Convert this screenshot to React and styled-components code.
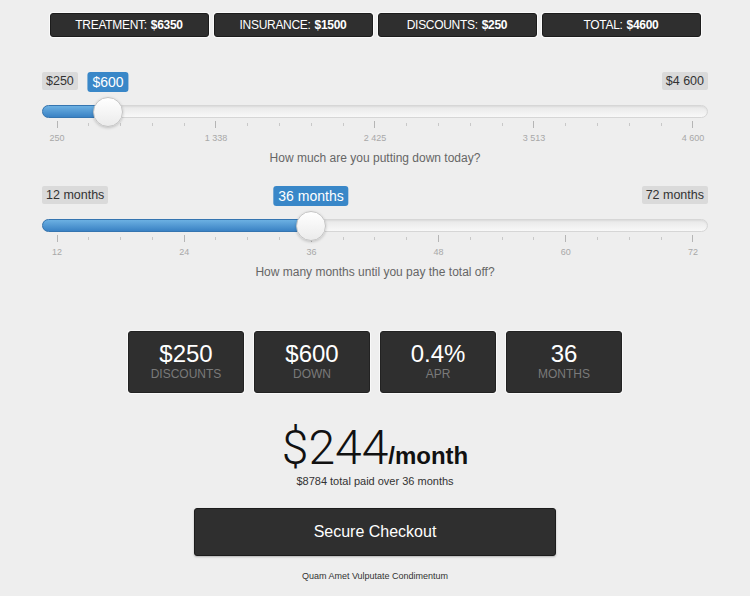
import React from "react";
import styled, { createGlobalStyle } from "styled-components";

const GlobalStyle = createGlobalStyle`
  body {
    margin: 0;
    background: #eeeeee;
    font-family: "Liberation Sans", Arial, sans-serif;
  }
`;

const fmt = (n) => String(n).replace(/\B(?=(\d{3})+(?!\d))/g, " ");

const Slider = ({ min, max, value, ticks, majorEvery, label, tickLabel, question, top }) => {
  const frac = (value - min) / (max - min);
  const pos = `${15 + frac * 635}px`;
  const count = ticks + 1;
  const majors = [];
  for (let i = 0; i < count; i += majorEvery) majors.push(min + ((max - min) * i) / ticks);

  return (
    <Block $top={top}>
      <LabelRow>
        <MinMax>{label(min)}</MinMax>
        <Bubble style={{ left: pos }}>{label(value)}</Bubble>
        <MinMax>{label(max)}</MinMax>
      </LabelRow>
      <TrackWrap>
        <Track />
        <Fill style={{ width: pos }} />
        <Thumb style={{ left: pos }} />
      </TrackWrap>
      <Ticks>
        {Array.from({ length: count }).map((_, i) => (
          <Tick key={i} $major={i % majorEvery === 0} />
        ))}
      </Ticks>
      <TickLabels>
        {majors.map((m) => (
          <TickLabel key={m}>{tickLabel(Math.round(m))}</TickLabel>
        ))}
      </TickLabels>
      <Question>{question}</Question>
    </Block>
  );
};

export default function App() {
  return (
    <Page>
      <GlobalStyle />
      <TopBar>
        <Summary>TREATMENT: <b>$6350</b></Summary>
        <Summary>INSURANCE: <b>$1500</b></Summary>
        <Summary>DISCOUNTS: <b>$250</b></Summary>
        <Summary>TOTAL: <b>$4600</b></Summary>
      </TopBar>

      <Slider
        top={35}
        min={250}
        max={4600}
        value={600}
        ticks={20}
        majorEvery={5}
        label={(v) => "$" + fmt(v)}
        tickLabel={(v) => fmt(v)}
        question="How much are you putting down today?"
      />
      <Slider
        top={20}
        min={12}
        max={72}
        value={36}
        ticks={20}
        majorEvery={4}
        label={(v) => `${v} months`}
        tickLabel={(v) => v}
        question="How many months until you pay the total off?"
      />

      <Stats>
        <Stat>
          <StatValue>$250</StatValue>
          <StatLabel>Discounts</StatLabel>
        </Stat>
        <Stat>
          <StatValue>$600</StatValue>
          <StatLabel>Down</StatLabel>
        </Stat>
        <Stat>
          <StatValue>0.4%</StatValue>
          <StatLabel>APR</StatLabel>
        </Stat>
        <Stat>
          <StatValue>36</StatValue>
          <StatLabel>Months</StatLabel>
        </Stat>
      </Stats>

      <Monthly>
        <Amount>$244</Amount>
        <Per>/month</Per>
      </Monthly>
      <TotalPaid>$8784 total paid over 36 months</TotalPaid>

      <Checkout>Secure Checkout</Checkout>
      <Footer>Quam Amet Vulputate Condimentum</Footer>
    </Page>
  );
}

const Page = styled.div`
  width: 750px;
  padding-top: 13px;
  display: flex;
  flex-direction: column;
  align-items: center;
`;

const TopBar = styled.div`
  display: flex;
  gap: 5px;
`;

const Summary = styled.div`
  width: 159px;
  height: 24px;
  box-sizing: border-box;
  background: #2f2f2f;
  border: 1px solid #1c1c1c;
  border-radius: 3px;
  box-shadow: 0 0 0 1px #fafafa;
  color: #fff;
  font-size: 12px;
  letter-spacing: -0.3px;
  display: flex;
  align-items: center;
  justify-content: center;
  gap: 4px;
  b {
    font-weight: bold;
  }
`;

const Block = styled.section`
  width: 666px;
  margin-top: ${({ $top }) => $top}px;
`;

const LabelRow = styled.div`
  position: relative;
  height: 20px;
  display: flex;
  justify-content: space-between;
  align-items: flex-start;
`;

const MinMax = styled.span`
  background: #dadada;
  color: #333;
  font-size: 12.5px;
  height: 18px;
  line-height: 18px;
  padding: 0 4px;
  border-radius: 2px;
`;

const Bubble = styled.span`
  position: absolute;
  top: 0;
  transform: translateX(-50%);
  background: #3987c8;
  color: #fff;
  font-size: 14px;
  height: 20px;
  line-height: 20px;
  padding: 0 5px;
  border-radius: 3px;
  white-space: nowrap;
`;

const TrackWrap = styled.div`
  position: relative;
  height: 13px;
  margin-top: 13px;
`;

const Track = styled.div`
  height: 13px;
  box-sizing: border-box;
  border-radius: 7px;
  background: linear-gradient(#e8e8e8, #f8f8f8);
  border: 1px solid #d6d6d6;
  box-shadow: inset 0 1px 2px rgba(0, 0, 0, 0.06);
`;

const Fill = styled.div`
  position: absolute;
  top: 0;
  left: 0;
  height: 13px;
  box-sizing: border-box;
  border-radius: 7px;
  background: linear-gradient(#6cb0e2, #3a82c4);
  border: 1px solid #3575b0;
`;

const Thumb = styled.div`
  position: absolute;
  top: 50%;
  width: 30px;
  height: 30px;
  box-sizing: border-box;
  border-radius: 50%;
  transform: translate(-50%, -50%);
  background: linear-gradient(#ffffff, #ebebeb);
  border: 1px solid #c4c4c4;
  box-shadow: 0 1px 3px rgba(0, 0, 0, 0.2);
`;

const Ticks = styled.div`
  display: flex;
  justify-content: space-between;
  align-items: center;
  height: 7px;
  margin-top: 3px;
  padding: 0 14.5px;
`;

const Tick = styled.span`
  width: 1px;
  height: ${({ $major }) => ($major ? 7 : 3)}px;
  background: ${({ $major }) => ($major ? "#b5b5b5" : "#c8c8c8")};
`;

const TickLabels = styled.div`
  display: flex;
  justify-content: space-between;
  padding: 0 15px;
  margin-top: 4px;
  height: 12px;
`;

const TickLabel = styled.span`
  width: 0;
  display: flex;
  justify-content: center;
  white-space: nowrap;
  font-size: 9px;
  line-height: 12px;
  color: #a8a8a8;
`;

const Question = styled.div`
  text-align: center;
  font-size: 12px;
  line-height: 16px;
  color: #666;
  margin-top: 6px;
`;

const Stats = styled.div`
  display: flex;
  gap: 10px;
  margin-top: 51px;
`;

const Stat = styled.div`
  width: 116px;
  height: 62px;
  box-sizing: border-box;
  background: #2f2f2f;
  border: 1px solid #222;
  border-radius: 3px;
  box-shadow: 0 0 0 1px #f8f8f8;
  display: flex;
  flex-direction: column;
  align-items: center;
  justify-content: center;
  padding-bottom: 2px;
`;

const StatValue = styled.div`
  color: #fff;
  font-size: 24px;
  line-height: 26px;
`;

const StatLabel = styled.div`
  color: #7a7a7a;
  font-size: 12px;
  line-height: 14px;
  text-transform: uppercase;
`;

const Monthly = styled.div`
  display: flex;
  align-items: baseline;
  margin-top: 28px;
  color: #111;
`;

const Amount = styled.span`
  font-family: Roboto, "Liberation Sans", sans-serif;
  font-weight: 300;
  font-size: 48px;
  line-height: 54px;
`;

const Per = styled.span`
  font-weight: bold;
  font-size: 24px;
`;

const TotalPaid = styled.div`
  font-size: 11px;
  color: #333;
`;

const Checkout = styled.button`
  width: 362px;
  height: 48px;
  margin-top: 21px;
  background: #2f2f2f;
  color: #fff;
  border: 1px solid #1c1c1c;
  border-radius: 3px;
  box-shadow: 0 1px 2px rgba(0, 0, 0, 0.25);
  font-family: "Liberation Sans", Arial, sans-serif;
  font-size: 16px;
  cursor: pointer;
`;

const Footer = styled.div`
  font-size: 9px;
  color: #333;
  margin-top: 15px;
`;
